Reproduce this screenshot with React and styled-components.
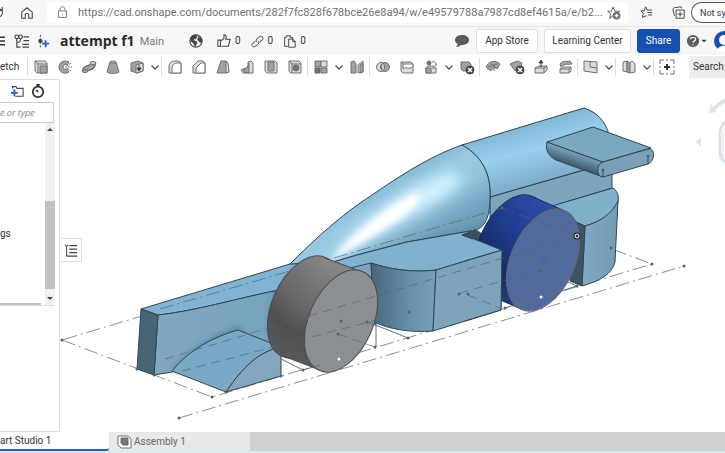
import React, {useState} from 'react';
import styled, {createGlobalStyle} from 'styled-components';

const url = 'https://cad.onshape.com/documents/282f7fc828f678bce26e8a94/w/e49579788a7987cd8ef4615a/e/b2...'

// toolbar glyphs, every one on a 16 x 16 grid
const glyphs = {
    extrude: <><path className='pale' d='M2 2H12L14 4V14H4L2 12Z'/><path d='M2 2L5 5H14M5 5V14'/><path className='fill' d='M7 7H14V14H7Z'/></>,
    revolve: <><path className='fill' d='M12 3C6 0 2 4 2 8C2 13 7 16 12 13L10 10C7 11 6 9 6 8C6 6 8 5 10 6Z'/><path d='M8 8H15M10 7L14 4M10 9L14 12' strokeDasharray='2 1'/></>,
    sweep: <><path d='M4 12C4 7 12 11 12 4' stroke='#555' strokeWidth='6'/><path d='M4 12C4 7 12 11 12 4' stroke='#a2a2a2' strokeWidth='4'/><ellipse className='pale' cx='12' cy='4' rx='3' ry='1.5'/><ellipse className='fill' cx='4' cy='12' rx='3' ry='1.5'/></>,
    loft: <><path className='fill' d='M5 3H11L14 13C11 15 5 15 2 13Z'/><ellipse className='pale' cx='8' cy='3' rx='3' ry='1'/></>,
    thicken: <><path className='fill' d='M2 4L9 2L14 4V12L8 14L2 12Z'/><path className='pale' d='M7 6L14 4V12L7 14Z'/><path className='dark' d='M10 6V10M8 9L10 12L12 9Z'/></>,
    fillet: <><path className='pale' d='M2 14V8C2 4 4 2 8 2H12L14 4V14Z'/><path className='white' d='M5 14V10C5 6 7 4 11 4H14V14Z'/></>,
    chamfer: <><path className='pale' d='M2 14V7L7 2H12L14 4V14Z'/><path className='white' d='M5 14V9L10 4H14V14Z'/></>,
    draft: <><path className='fill' d='M6 2H11L14 13L11 14H2Z'/><path className='pale' d='M11 2L13 4L14 13L11 14Z'/></>,
    rib: <><path className='pale' d='M2 11L9 8V3L12 2L14 4V14H4Z'/><path className='fill' d='M4 11C8 10 9 7 10 4V14L5 13Z'/></>,
    shell: <><path className='pale' d='M2 2H12L14 4V14H4L2 12Z'/><path className='fill' d='M5 3H11V12H5Z'/></>,
    hole: <><path className='pale' d='M2 2H12L14 4V14H4L2 12Z'/><path d='M2 2L5 5H14M5 5V14'/><circle className='shade' cx='9' cy='9' r='3'/></>,
    pattern: <><path className='fill' d='M2 2H8V8H2Z'/><path className='pale' d='M8 2H14V8H8Z'/><path className='shade' d='M2 9H7V14H2Z'/><path className='fill' d='M8 9H14V14H8Z'/></>,
    mirror: <><path className='fill' d='M2 3L5 2L7 5V14H2Z'/><path className='pale' d='M9 6L14 2V13L9 14Z'/><path className='fill' d='M11 6L14 4V13L11 14Z'/></>,
    boolean: <><circle className='pale' cx='6' cy='8' r='4.5'/><circle className='fill' cx='10' cy='8' r='4.5'/><path className='pale' d='M8 4C10 6 10 10 8 12C6 10 6 6 8 4Z'/></>,
    split: <><path className='pale' d='M2 3H12L14 5V14H4L2 12Z'/><path className='white' d='M4 5H14V8C9 11 8 7 4 10Z'/><path d='M2 3L4 5'/></>,
    transform: <><path className='pale' d='M3 9L5 7H11L13 9V14H3Z'/><path className='fill' d='M3 9H8V14H3Z'/><circle className='shade' cx='6' cy='4' r='2'/><path d='M9 3C12 2 13 3 13 6M12 6H14M9 9H13'/></>,
    remove: <><path className='fill' d='M2 3H10L12 5V12H4L2 10Z'/><circle className='dark' cx='11' cy='11' r='4'/><path className='light' d='M9 9L13 13M13 9L9 13'/></>,
    modify: <><path className='fill' d='M1 8C3 3 10 0 15 5L12 10C10 8 8 8 6 12Z'/><path d='M6 5L11 9M9 6L9 12M3 8L12 5'/></>,
    deleteFace: <><path className='fill' d='M1 5L8 2L13 4L12 9L6 12Z'/><circle className='dark' cx='11' cy='11' r='4'/><path className='light' d='M9 9L13 13M13 9L9 13'/></>,
    moveFace: <><path className='pale' d='M2 9L6 7H14V11L11 14H2Z'/><path d='M2 9H11V14M11 9L14 7'/><path className='dark' d='M8 8V3M6 4L8 1L10 4Z'/></>,
    replaceFace: <><path className='fill' d='M3 5C6 1 9 3 13 2L15 5C11 6 8 4 4 8Z'/><path className='pale' d='M3 10L6 8H14V12L12 14H3Z'/><path d='M3 10H12V14M12 10L14 8'/></>,
    plane: <><path className='pale' d='M1 2L14 3V14L1 12Z'/><path d='M7 3V8L14 9'/></>,
    sheet: <><path className='pale' d='M2 3L6 2V13L2 12Z'/><path className='fill' d='M6 2L9 4V14L6 13Z'/><path className='pale' d='M9 4L11 2L14 5V13L9 14Z'/></>,
    add: <><path d='M1 5V1H5M7 1H9M11 1H15V5M15 7V9M15 11V15H11M9 15H7M5 15H1V11M1 9V7'/><path className='heavy' d='M8 5V11M5 8H11'/></>,
}

// 'caret' and 'sep' sit between the tools
const tools = [
    'sep', 'extrude', 'revolve', 'sweep', 'loft', 'thicken', 'caret',
    'sep', 'fillet', 'chamfer', 'draft', 'rib', 'shell', 'hole',
    'sep', 'pattern', 'caret', 'mirror',
    'sep', 'boolean', 'split', 'transform', 'caret', 'remove',
    'sep', 'modify', 'deleteFace', 'moveFace', 'replaceFace',
    'sep', 'plane', 'caret',
    'sep', 'sheet', 'caret',
    'sep', 'add',
]

const Glyph = ({children, size = 16}) => (
    <GlyphSvg width={size} height={size} viewBox='0 0 16 16' aria-hidden='true'>{children}</GlyphSvg>
)

const BrowserBar = () => (
    <Browser>
        <IconButton $w={7} aria-label='Reload'>
            <Glyph size={14}><path className='line' d='M1 3C5 3 7 6 6 9C5 12 3 13 0 13M6 1V5H2'/></Glyph>
        </IconButton>
        <IconButton $w={40} aria-label='Home'>
            <Glyph size={14}><path className='line' d='M2 7L8 2L14 7V14H10V10C10 8 6 8 6 10V14H2Z'/></Glyph>
        </IconButton>
        <AddressBox>
            <Glyph size={13}><path className='soft' d='M3 6H13V14H3ZM5 6V4C5 0 11 0 11 4V6M8 10V11'/></Glyph>
            <Address aria-label='Address' readOnly value={url} />
            <IconButton $w={16} aria-label='Add to favorites'>
                <Glyph size={14}><path className='soft' d='M7 1L9 6H14L11 9M7 1L5 6H1L4 9L3 14L7 11'/><circle className='shade' cx='11' cy='11' r='4'/><path className='light' d='M11 9V13M9 11H13'/></Glyph>
            </IconButton>
        </AddressBox>
        <IconButton $w={37} aria-label='Favorites'>
            <Glyph size={13}><path className='line' d='M8 12L3 14L4 9L1 6H5L7 1L9 5H15M9 8H15M10 11H15'/></Glyph>
        </IconButton>
        <IconButton $w={26} aria-label='Collections'>
            <Glyph size={13}><path className='line' d='M5 5H15V15H5ZM10 7V13M7 10H13M3 12L1 4L3 2L11 1L12 3'/></Glyph>
        </IconButton>
        <SyncPill>Not sy</SyncPill>
    </Browser>
)

const DocumentBar = () => (
    <Header>
        <IconButton $w={10} aria-label='Menu'>
            <Glyph size={12}><path className='heavy' d='M0 3H8M0 8H8M0 13H8'/></Glyph>
        </IconButton>
        <IconButton $w={22} aria-label='Versions and history'>
            <Glyph size={15}><path className='line' d='M3 5V14H7M3 9C7 9 7 7 7 5M10 3H16M10 7H16M9 11H16M9 14H16'/><circle className='line' cx='3' cy='3' r='2'/><circle className='line' cx='7' cy='3' r='2'/></Glyph>
        </IconButton>
        <IconButton $w={22} aria-label='Create version'>
            <Glyph size={14}><path className='line' d='M5 1V15' strokeDasharray='2 2'/><circle className='dark' cx='5' cy='8' r='2'/><path className='blue' d='M11 7V15M7 11H15'/></Glyph>
        </IconButton>
        <Title>attempt f1</Title>
        <Branch>Main</Branch>
        <IconButton $w={16} aria-label='Public'>
            <Glyph size={14}><circle className='line' cx='8' cy='8' r='7'/><path className='dark' d='M2 4C4 1 7 1 9 2L8 5L5 6L6 8L9 9L8 12L7 14L5 10L2 8ZM11 3L15 6L14 10L11 8L10 6Z'/></Glyph>
        </IconButton>
        <Counters>
            <Counter aria-label='Likes'>
                <Glyph size={14}><path className='line' d='M1 7H4V14H1ZM4 8L8 5V1C11 1 11 4 10 6H15L13 14H5'/></Glyph>0
            </Counter>
            <Counter aria-label='Links'>
                <Glyph size={13}><path className='line' d='M7 9C5 7 7 5 8 4L11 2C14 0 16 4 14 6L11 8M9 7C11 9 9 11 8 12L5 14C2 16 0 12 2 10L5 8'/></Glyph>0
            </Counter>
            <Counter aria-label='Copies'>
                <Glyph size={13}><path className='line' d='M6 14H2V3H4V1H9V3H12V5M7 5H12L15 8V15H7ZM12 5V8H15'/></Glyph>0
            </Counter>
        </Counters>
        <Spacer />
        <IconButton $w={28} aria-label='Comments'>
            <Glyph><path className='solid' d='M8 2C3 2 1 5 1 7C1 9 2 10 4 11L2 14C4 14 6 13 7 12C12 12 15 10 15 7C15 4 12 2 8 2Z'/></Glyph>
        </IconButton>
        <HeaderButton $w={62}>App Store</HeaderButton>
        <HeaderButton $w={87}>Learning Center</HeaderButton>
        <HeaderButton $w={43} $primary>Share</HeaderButton>
        <IconButton $w={14} aria-label='Help'>
            <Glyph size={14}><circle className='solid' cx='8' cy='8' r='7'/><path className='light' d='M5 6C5 3 11 3 11 6C11 8 8 8 8 10M8 12V13'/></Glyph>
        </IconButton>
        <IconButton $w={8} aria-label='Help menu'>
            <Glyph size={6}><path className='dark' d='M2 5H14L8 11Z'/></Glyph>
        </IconButton>
        <Avatar aria-label='Account'>
            <svg width='20' height='20' viewBox='0 0 20 20' aria-hidden='true'>
                <circle cx='10' cy='10' r='10' fill='#1651b0'/>
                <circle cx='10' cy='9' r='5' fill='#fff'/>
                <path d='M3 20C4 13 16 13 17 20Z' fill='#fff'/>
            </svg>
        </Avatar>
    </Header>
)

const ToolBar = () => (
    <Tools>
        <SketchButton>etch</SketchButton>
        {tools.map((tool, i) => {
            if (tool === 'sep') return <Separator key={i} />
            if (tool === 'caret') return (
                <IconButton key={i} $w={12} aria-label='More tools'>
                    <Glyph size={8}><path className='caret' d='M1 5L8 12L15 5'/></Glyph>
                </IconButton>
            )
            return <IconButton key={i} $w={24} aria-label={tool}><Glyph>{glyphs[tool]}</Glyph></IconButton>
        })}
        <SearchButton>Search</SearchButton>
    </Tools>
)

const FeaturePanel = () => {
    const [filter, setFilter] = useState('');

    return (
    <Panel>
        <PanelActions>
            <IconButton $w={16} aria-label='Add folder'>
                <Glyph size={14}><path className='line' d='M3 5V3H7L8 5H15V14H6'/><path className='blue' d='M5 6V14M1 10H9'/></Glyph>
            </IconButton>
            <IconButton $w={16} aria-label='Regeneration times'>
                <Glyph size={14}><circle className='heavy' cx='8' cy='9' r='6'/><path className='heavy' d='M6 1H10M8 1V3M6 7L8 9'/></Glyph>
            </IconButton>
        </PanelActions>
        <Filter aria-label='Filter' placeholder='e or type' value={filter} onChange={(e) => {setFilter(e.target.value)}} />
        <PartList>
            <PartName>gs</PartName>
            <ScrollTrack>
                <Arrow $up />
                <Thumb />
                <Arrow />
            </ScrollTrack>
        </PartList>
        <ScrollRest />
    </Panel>
    )
}

const CarModel = () => (
    <ModelSvg viewBox='60 79 665 353' preserveAspectRatio='xMinYMin slice' role='img' aria-label='Car model'>
        <defs>
            <linearGradient id='cone' gradientUnits='userSpaceOnUse' x1='370' y1='180' x2='410' y2='250'>
                <stop offset='0' stopColor='#7fb2cf'/>
                <stop offset='0.35' stopColor='#98cae3'/>
                <stop offset='0.6' stopColor='#94c5df'/>
                <stop offset='1' stopColor='#6f9fba'/>
            </linearGradient>
            <linearGradient id='tube' gradientUnits='userSpaceOnUse' x1='525' y1='125' x2='542' y2='186'>
                <stop offset='0' stopColor='#83b7d4'/>
                <stop offset='0.4' stopColor='#98d0ee'/>
                <stop offset='1' stopColor='#79a9c4'/>
            </linearGradient>
            <linearGradient id='pod' x1='0' x2='1'>
                <stop offset='0' stopColor='#476779'/>
                <stop offset='0.6' stopColor='#6691aa'/>
                <stop offset='1' stopColor='#769fb8'/>
            </linearGradient>
            <linearGradient id='rearPod' x1='0' x2='1'>
                <stop offset='0' stopColor='#80aac3'/>
                <stop offset='1' stopColor='#739bb2'/>
            </linearGradient>
            <linearGradient id='nose' x1='0' x2='1'>
                <stop offset='0' stopColor='#82a8c0'/>
                <stop offset='0.8' stopColor='#76a4c0'/>
                <stop offset='1' stopColor='#5d88a1'/>
            </linearGradient>
            <linearGradient id='tire' gradientUnits='userSpaceOnUse' x1='325' y1='258' x2='285' y2='357'>
                <stop offset='0' stopColor='#8a8887'/>
                <stop offset='0.45' stopColor='#6c6b6c'/>
                <stop offset='0.75' stopColor='#505053'/>
                <stop offset='1' stopColor='#59595b'/>
            </linearGradient>
            <linearGradient id='blueTire' gradientUnits='userSpaceOnUse' x1='533' y1='197' x2='489' y2='295'>
                <stop offset='0' stopColor='#2c4da6'/>
                <stop offset='0.4' stopColor='#1e3c8e'/>
                <stop offset='0.75' stopColor='#172b62'/>
                <stop offset='1' stopColor='#233c7c'/>
            </linearGradient>
            <linearGradient id='wingEdge' gradientUnits='userSpaceOnUse' x1='577' y1='150' x2='571' y2='168'>
                <stop offset='0' stopColor='#83b0ca'/>
                <stop offset='1' stopColor='#344e5d'/>
            </linearGradient>
            <filter id='shine' x='-30%' y='-30%' width='160%' height='160%'><feGaussianBlur stdDeviation='7'/></filter>
            <filter id='shine2' x='-30%' y='-30%' width='160%' height='160%'><feGaussianBlur stdDeviation='3'/></filter>
            <clipPath id='coneClip'><path d='M290 264C330 224 352 208 375 193C410 169 434 155 462 145C482 156 491 174 490 197C490 215 486 227 476 230L407 242L357 255L333 262Z'/></clipPath>
        </defs>

        {/* construction axes */}
        <g stroke='#87919a' strokeDasharray='14 4 2 4' fill='none'>
            <path d='M62 340L212 397L652 264L502 208Z'/>
            <path d='M179 418L684 266'/>
        </g>

        <g stroke='#2f4654' strokeLinejoin='round'>
            {/* nose */}
            <path fill='#81b4d3' d='M141 309L290 264L315 262L300 285L274 291C235 299 195 311 158 315Z'/>
            <path fill='url(#nose)' d='M158 315C195 311 235 299 274 291L290 300L281 347L172 372L154 375Z'/>
            <path fill='#486475' d='M141 309L158 315L154 375L137 369Z'/>

            {/* rear body */}
            <path fill='#7ba5bd' d='M490 197L612 162L612 188L553 206L530 225L490 225Z'/>
            <path fill='url(#tube)' d='M462 145L584 108C597 112 606 122 609 135L611 162L490 197C491 174 482 156 462 145Z'/>
            <path fill='#80b0ca' d='M545 208L613 188C619 192 620 200 616 206C611 215 599 222 585 226L560 217Z'/>
            <path fill='url(#rearPod)' d='M585 226C599 222 611 215 618 201L615 262C612 274 600 281 582 286Z'/>
            <path fill='#3c5563' d='M572 220L585 226L582 286L570 281Z'/>

            {/* engine cover */}
            <path fill='url(#cone)' d='M290 264C330 224 352 208 375 193C410 169 434 155 462 145C482 156 491 174 490 197C490 215 486 227 476 230L407 242L357 255L333 262Z'/>
        </g>
        <g clipPath='url(#coneClip)'>
            <path d='M328 267L492 234V220C450 234 390 247 328 267Z' fill='#557f98' opacity='0.6' filter='url(#shine2)'/>
            <path d='M326 262C345 236 396 192 444 174C468 168 466 182 446 196C402 223 358 244 326 262Z' fill='#d4f3ff' filter='url(#shine)'/>
            <path d='M328 264C346 240 380 211 412 194C426 192 420 204 402 217C374 237 348 249 328 264Z' fill='#fff' filter='url(#shine2)'/>
        </g>

        <g stroke='#2f4654' strokeLinejoin='round'>
            {/* wing */}
            <path fill='url(#wingEdge)' d='M547 142L603 162C597 165 596 174 603 177L556 160C548 156 545 149 547 142Z'/>
            <path fill='#7ba8c1' d='M547 142L593 127L651 148L603 162Z'/>
            <path fill='#7aa0b7' d='M603 162L648 149C656 148 655 161 648 164L603 177C596 177 596 164 603 162Z'/>
            <path fill='none' d='M603 169V177M648 156V164'/>

            {/* side pod */}
            <path fill='#7aa5be' d='M335 262L371 262L376 325L340 320Z'/>
            <path fill='#7eb2ce' d='M333 262L357 255L407 242L476 230L462 235L502 250L436 270C412 273 389 269 371 263L350 268Z'/>
            <path fill='url(#pod)' d='M371 263C389 269 412 273 436 270L433 331C410 333 389 329 374 322Z'/>
            <path fill='#7ea4bc' d='M436 270L502 250L501 310L433 331Z'/>
            <path fill='#3a5260' d='M462 235L476 230L485 236L480 241Z'/>

            {/* front wing */}
            <path stroke='none' fill='#3c5d70' opacity='0.5' filter='url(#shine2)' d='M172 371C190 348 215 335 238 327L246 333L190 374Z'/>
            <path fill='#79a9c5' d='M172 371C188 351 212 337 238 330L281 347C258 352 243 367 226 392Z'/>
            <path fill='#83a8be' d='M281 347C258 352 243 367 226 392L281 376Z'/>
        </g>

        {/* front wheel */}
        <g stroke='#4a4a4c'>
            <ellipse cx='304' cy='307' rx='32' ry='54' transform='rotate(24 304 307)' fill='url(#tire)'/>
            <path fill='url(#tire)' stroke='none' d='M325 258L362 272L320 370L283 356Z'/>
            <path d='M325 258L362 272M283 356L320 370'/>
            <ellipse cx='341' cy='321' rx='32' ry='54' transform='rotate(24 341 321)' fill='#8b8f92'/>
        </g>

        {/* rear wheel, selected */}
        <g stroke='#1a2b57'>
            <ellipse cx='511' cy='246' rx='32' ry='54' transform='rotate(24 511 246)' fill='url(#blueTire)'/>
            <path fill='url(#blueTire)' stroke='none' d='M533 197L565 211L521 309L489 295Z'/>
            <path d='M533 197L565 211M489 295L521 309'/>
            <ellipse cx='543' cy='260' rx='32' ry='54' transform='rotate(24 543 260)' fill='#52699d' stroke='#66666f'/>
        </g>
        {/* pod covers the lower left of the wheel */}
        <path fill='#7ea4bc' d='M470 260L502 250L501 310L470 319Z'/>
        <path fill='#7eb2ce' d='M474 239L501 250L470 259L462 245Z'/>
        <path fill='none' stroke='#2f4654' d='M474 239L502 250L501 310L465 321M502 250L465 261'/>

        {/* hidden edges seen through the bodies */}
        <g stroke='#4f626e' strokeDasharray='9 6' fill='none' opacity='0.65'>
            <path d='M165 359L577 236M182 371L376 320M460 293L541 270M468 295L502 309'/>
            <path d='M160 309L290 271M334 258L502 208L577 236' strokeDasharray='14 4 2 4'/>
            <path d='M338 334L375 347'/>
        </g>
        <g stroke='#65717a' fill='none'>
            <path d='M281 359L303 370M368 322L408 338M376 325V347M303 370L320 365M541 270L577 286L505 308'/>
        </g>
        <g fill='#55616a'>
            {[[62, 340], [137, 369], [154, 375], [179, 418], [212, 397], [226, 392], [281, 376], [303, 370], [338, 334], [341, 321],
                [367, 322], [375, 347], [408, 338], [409, 312], [459, 294], [468, 294], [502, 208], [505, 308], [541, 271], [544, 260],
                [577, 286], [611, 248], [652, 264], [684, 266], [603, 170], [648, 156]].map(([x, y]) =>
                <circle key={x + '-' + y} cx={x} cy={y} r='1.5'/>
            )}
        </g>
        <circle cx='339' cy='359' r='1.5' fill='#fff'/>
        <circle cx='541' cy='297' r='1.5' fill='#fff'/>
        <circle cx='577' cy='236' r='2.5' fill='#333' stroke='#222' strokeWidth='2'/>
        <circle cx='577' cy='236' r='2' fill='none' stroke='#fff'/>

        {/* view cube */}
        <g fill='#dbe3ea'>
            <path d='M695 142L701 138V147Z'/>
            <path d='M709 113L711 104L713 107C717 103 721 100 726 98V102C721 104 718 107 715 110L717 112Z'/>
            <path d='M726 121C722 124 720 128 720 134V151C720 157 722 161 726 162' fill='none' stroke='#dbe3ea' strokeWidth='3'/>
            <path d='M723 135C723 130 725 128 728 126M723 135V158' fill='none' stroke='#dbe3ea'/>
        </g>
    </ModelSvg>
)

const App = () => (
    <Page>
        <GlobalStyle />
        <BrowserBar />
        <DocumentBar />
        <ToolBar />
        <Workspace>
            <FeaturePanel />
            <Viewport>
                <CarModel />
                <ListToggle aria-label='Show list'>
                    <Glyph size={14}><path className='line' d='M1 2L3 4L5 2M3 4V15M6 3H15M6 7H15M6 11H15M3 15H15'/></Glyph>
                </ListToggle>
            </Viewport>
        </Workspace>
        <TabBar>
            <Tab $active $w={109}>art Studio 1</Tab>
            <Tab $w={141}>
                <Glyph><path className='white' d='M2 2H12L15 5V14H5L2 11Z'/><path className='shade' d='M5 4H12V11H7L5 9Z'/></Glyph>
                Assembly 1
            </Tab>
        </TabBar>
    </Page>
)

const GlobalStyle = createGlobalStyle`
    * {
        box-sizing: border-box;
    }
    body {
        margin: 0;
        overflow: hidden;
        font: 10px/14px Roboto, "Liberation Sans", sans-serif;
        color: #333;
    }
    button, input {
        font: inherit;
        color: inherit;
    }
`

const Page = styled.div`
    display: flex;
    flex-direction: column;
    height: 100vh;
    overflow: hidden;
    background: #fff;
`

const GlyphSvg = styled.svg`
    flex: none;
    fill: none;
    stroke: #707070;
    .white { fill: #fff; }
    .pale { fill: #dcdcdc; }
    .fill { fill: #a2a2a2; }
    .shade { fill: #777; stroke: #666; }
    .dark { fill: #444; stroke: #444; }
    .solid { fill: #5a5a5a; stroke: none; }
    .light { stroke: #fff; stroke-width: 1.5; }
    .line { stroke: #444; stroke-width: 1.2; }
    .soft { stroke: #777; stroke-width: 1.2; }
    .heavy { stroke: #333; stroke-width: 2; }
    .caret { stroke: #555; stroke-width: 2.5; }
    .blue { stroke: #1f5ecb; stroke-width: 2; }
`

const IconButton = styled.button`
    display: flex;
    flex: none;
    align-items: center;
    justify-content: center;
    width: ${(props) => props.$w}px;
    padding: 0;
    border: 0;
    background: none;
    overflow: hidden;
`

const Browser = styled.div`
    display: flex;
    flex: none;
    align-items: stretch;
    height: 27px;
    padding: 2px 0 3px;
    background: #f7f7f7;
    border-bottom: 1px solid #e6e6e6;
    overflow: hidden;
`

const AddressBox = styled.div`
    display: flex;
    flex: 1;
    align-items: center;
    min-width: 0;
    padding: 0 6px 0 9px;
    background: #fff;
    border-radius: 3px;
`

const Address = styled.input`
    flex: 1;
    min-width: 0;
    margin-left: 9px;
    padding: 0;
    border: 0;
    outline: 0;
    background: none;
    font-size: 11px;
    line-height: 16px;
    color: #707070;
`

const SyncPill = styled.button`
    width: 34px;
    padding: 0 0 0 8px;
    border: 1px solid #555;
    border-right: 0;
    border-radius: 11px 0 0 11px;
    background: #fff;
    font-size: 9px;
    text-align: left;
    white-space: nowrap;
    overflow: hidden;
`

const Header = styled.header`
    display: flex;
    flex: none;
    align-items: center;
    height: 28px;
    background: #f7f7f7;
    overflow: hidden;
`

const Title = styled.h1`
    margin: 0 5px 0 6px;
    font: 700 14px/20px "Open Sans", sans-serif;
    color: #2b2b2b;
    white-space: nowrap;
`

const Branch = styled.span`
    margin-right: 24px;
    padding-top: 2px;
    font-size: 11px;
    color: #777;
`

const Counters = styled.div`
    display: flex;
    gap: 10px;
    margin-left: 13px;
`

const Counter = styled.button`
    display: flex;
    align-items: center;
    gap: 4px;
    padding: 0;
    border: 0;
    background: none;
`

const Spacer = styled.div`
    flex: 1;
`

const HeaderButton = styled.button`
    flex: none;
    width: ${(props) => props.$w}px;
    height: 24px;
    margin-right: 6px;
    padding: 0;
    border: 1px solid ${(props) => (props.$primary ? '#1651b0' : '#dedede')};
    border-radius: 3px;
    background: ${(props) => (props.$primary ? '#1651b0' : '#fff')};
    color: ${(props) => (props.$primary ? '#fff' : '#333')};
    white-space: nowrap;
`

const Avatar = styled.button`
    flex: none;
    width: 17px;
    height: 20px;
    padding: 0 0 0 6px;
    border: 0;
    background: none;
    overflow: hidden;
`

const Tools = styled.div`
    display: flex;
    flex: none;
    align-items: center;
    height: 24px;
    background: #fff;
    overflow: hidden;
`

const SketchButton = styled.button`
    flex: none;
    width: 27px;
    padding: 0;
    border: 0;
    background: none;
    text-align: left;
`

const Separator = styled.span`
    flex: none;
    width: 1px;
    height: 18px;
    margin-right: 1px;
    background: #ddd;
`

const SearchButton = styled.button`
    flex: 1;
    height: 22px;
    margin-left: 10px;
    padding: 0 0 0 4px;
    border: 0;
    background: #ededed;
    text-align: left;
    overflow: hidden;
`

const Workspace = styled.main`
    display: flex;
    flex: 1;
    min-height: 0;
`

const Panel = styled.aside`
    display: flex;
    flex: none;
    flex-direction: column;
    width: 60px;
    border: 1px solid #ddd;
    border-left: 0;
`

const PanelActions = styled.div`
    display: flex;
    flex: none;
    gap: 5px;
    height: 22px;
    padding-left: 9px;
`

const Filter = styled.input`
    flex: none;
    width: 54px;
    height: 21px;
    padding: 0;
    border: 1px solid #ccc;
    border-left: 0;
    font: italic 9px/14px "Open Sans", sans-serif;
    &::placeholder {
        color: #8a8a8a;
        opacity: 1;
    }
`

const PartList = styled.div`
    display: flex;
    flex: 183;
    justify-content: space-between;
    width: 55px;
    min-height: 0;
    border-bottom: 1px solid #ddd;
`

const PartName = styled.span`
    align-self: center;
    margin-top: 40px;
`

const ScrollTrack = styled.div`
    display: flex;
    flex-direction: column;
    width: 10px;
    padding: 5px 0;
    background: #f1f1f1;
`

const Arrow = styled.span`
    margin: 0 auto;
    border: 3px solid transparent;
    border-top: ${(props) => (props.$up ? '0' : '3px solid #444')};
    border-bottom: ${(props) => (props.$up ? '3px solid #444' : '0')};
`

const Thumb = styled.div`
    flex: 1;
    margin: 70px 0 8px;
    background: #c1c1c1;
`

const ScrollRest = styled.div`
    flex: 126;
    &::before {
        content: '';
        display: block;
        width: 41px;
        height: 2px;
        margin-top: -3px;
        background: #c1c1c1;
    }
`

const Viewport = styled.section`
    position: relative;
    flex: 1;
    min-width: 0;
    overflow: hidden;
`

const ModelSvg = styled.svg`
    display: block;
    width: 100%;
    height: 100%;
`

// floats over the drawing, stuck to the panel
const ListToggle = styled.button`
    position: absolute;
    top: 45%;
    left: 0;
    display: flex;
    align-items: center;
    justify-content: center;
    width: 22px;
    height: 24px;
    padding: 0;
    border: 1px solid #ddd;
    border-left: 0;
    background: #fff;
`

const TabBar = styled.nav`
    display: flex;
    flex: none;
    height: 21px;
    background: #d0d0d0;
    border-bottom: 2px solid #dbe8ee;
`

const Tab = styled.button`
    display: flex;
    align-items: center;
    gap: 2px;
    width: ${(props) => props.$w}px;
    padding: 0 0 0 ${(props) => (props.$active ? 0 : 7)}px;
    border: 0;
    border-bottom: ${(props) => (props.$active ? '2px solid #1f5ecb' : '0')};
    border-radius: 0 0 3px 0;
    background: ${(props) => (props.$active ? '#fff' : '#e8e8e8')};
    color: ${(props) => (props.$active ? '#333' : '#666')};
`

export default App;
